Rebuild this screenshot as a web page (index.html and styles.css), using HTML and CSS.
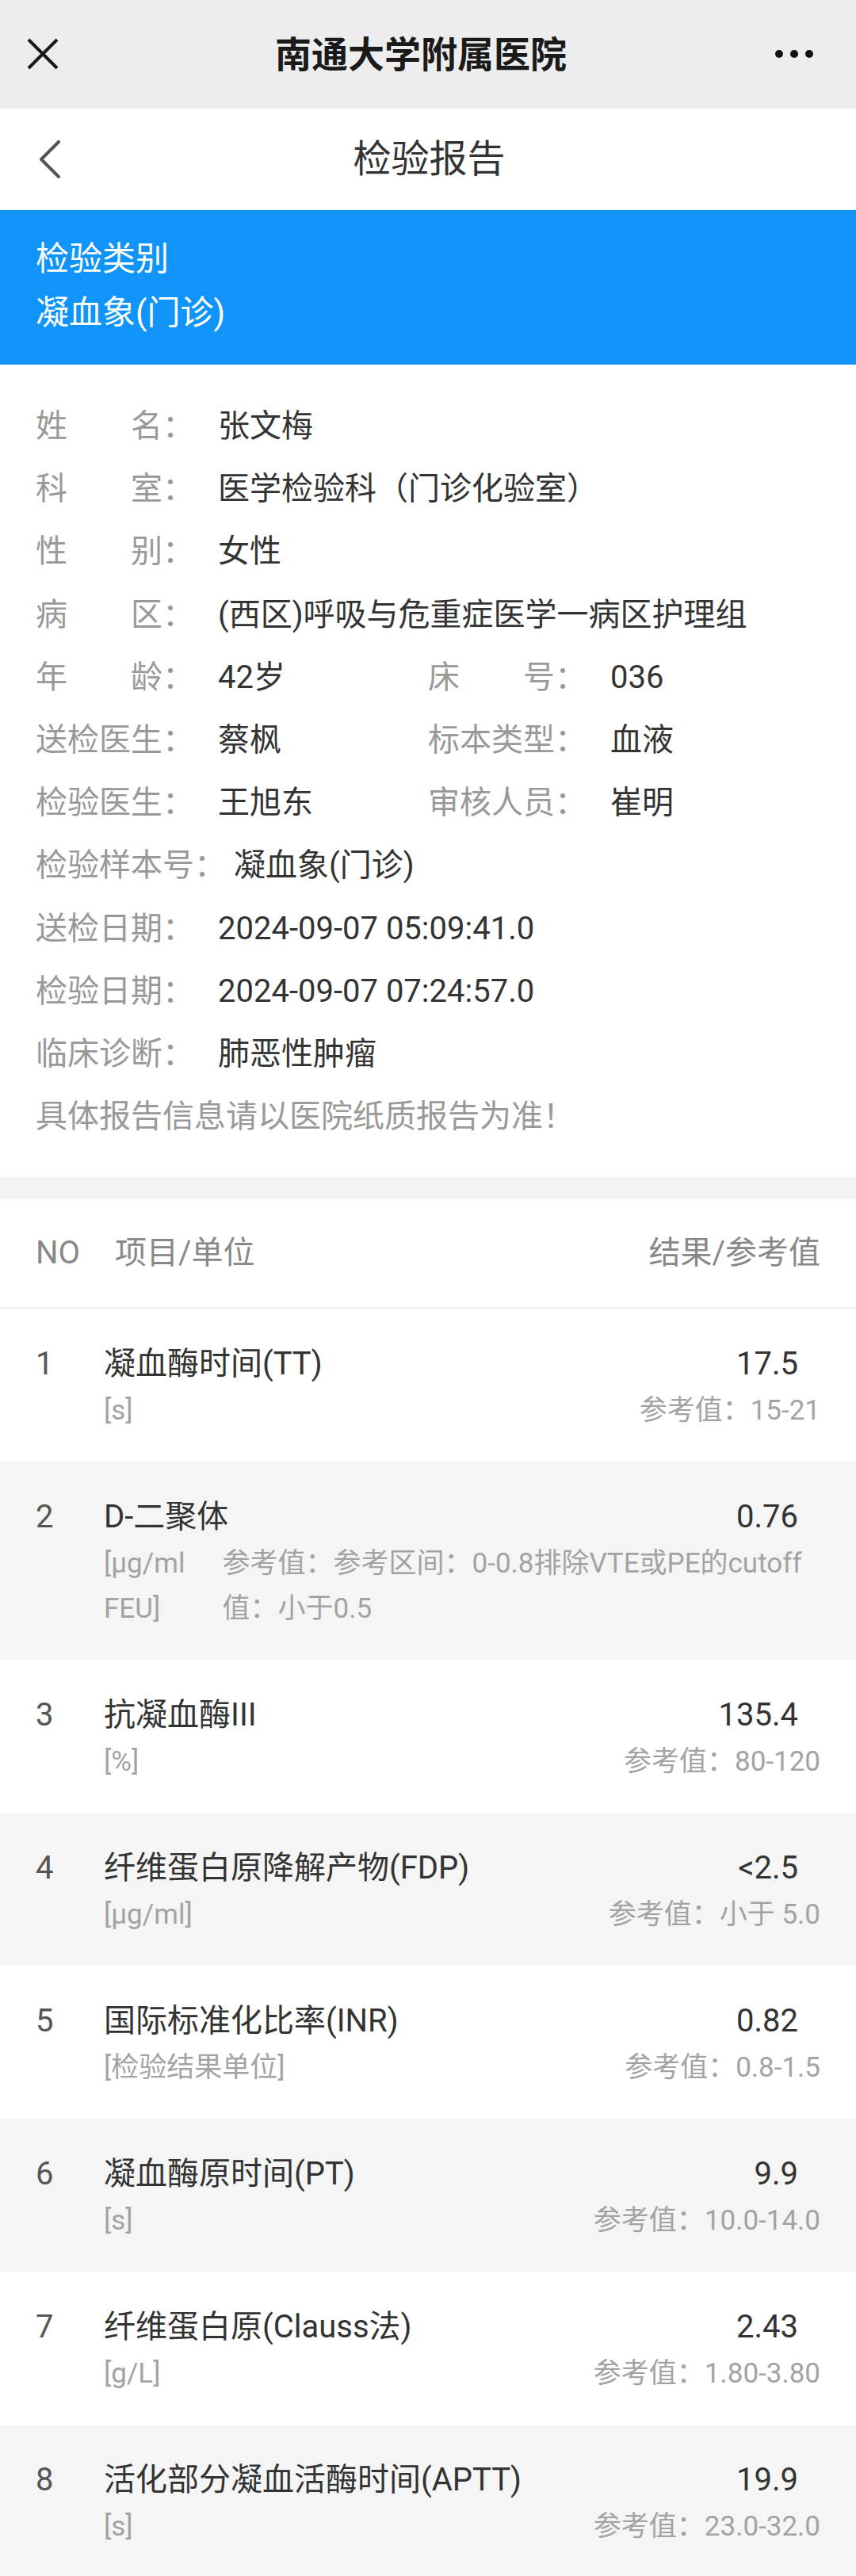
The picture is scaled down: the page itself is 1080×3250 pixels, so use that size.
FILE: index.html
```html
<!DOCTYPE html>
<html lang="zh-CN">
<head>
<meta charset="utf-8">
<title>检验报告</title>
<link rel="stylesheet" href="styles.css">
</head>
<body>
<div class="topbar">
  <div class="tb-left">
    <svg class="ic-close" width="40" height="40" viewBox="0 0 40 40"><path d="M2 2L38 38M38 2L2 38" stroke="#1a1a1a" stroke-width="4" fill="none"/></svg>
  </div>
  <div class="tb-title">南通大学附属医院</div>
  <div class="tb-right">
    <svg class="ic-more" width="50" height="12" viewBox="0 0 50 12"><circle cx="5" cy="6" r="5" fill="#111"/><circle cx="24" cy="6" r="5" fill="#111"/><circle cx="43" cy="6" r="5" fill="#111"/></svg>
  </div>
</div>

<div class="navbar">
  <div class="nb-left">
    <svg class="ic-back" width="30" height="48" viewBox="0 0 30 48"><path d="M26 2L4 24L26 46" stroke="#555" stroke-width="4" fill="none" stroke-linecap="round" stroke-linejoin="round"/></svg>
  </div>
  <div class="nb-title">检验报告</div>
  <div class="nb-right"></div>
</div>

<div class="category">
  <div>检验类别</div>
  <div>凝血象(门诊)</div>
</div>

<div class="info">
  <div class="irow"><span class="lab"><span class="j">姓名</span>：</span><span class="val">张文梅</span></div>
  <div class="irow"><span class="lab"><span class="j">科室</span>：</span><span class="val">医学检验科（门诊化验室）</span></div>
  <div class="irow"><span class="lab"><span class="j">性别</span>：</span><span class="val">女性</span></div>
  <div class="irow"><span class="lab"><span class="j">病区</span>：</span><span class="val">(西区)呼吸与危重症医学一病区护理组</span></div>
  <div class="irow two">
    <div class="cell"><span class="lab"><span class="j">年龄</span>：</span><span class="val">42岁</span></div>
    <div class="cell"><span class="lab"><span class="j">床号</span>：</span><span class="val">036</span></div>
  </div>
  <div class="irow two">
    <div class="cell"><span class="lab">送检医生：</span><span class="val">蔡枫</span></div>
    <div class="cell"><span class="lab">标本类型：</span><span class="val">血液</span></div>
  </div>
  <div class="irow two">
    <div class="cell"><span class="lab">检验医生：</span><span class="val">王旭东</span></div>
    <div class="cell"><span class="lab">审核人员：</span><span class="val">崔明</span></div>
  </div>
  <div class="irow"><span class="lab">检验样本号：</span><span class="val">凝血象(门诊)</span></div>
  <div class="irow"><span class="lab">送检日期：</span><span class="val">2024-09-07 05:09:41.0</span></div>
  <div class="irow"><span class="lab">检验日期：</span><span class="val">2024-09-07 07:24:57.0</span></div>
  <div class="irow"><span class="lab">临床诊断：</span><span class="val">肺恶性肿瘤</span></div>
  <div class="irow note">具体报告信息请以医院纸质报告为准！</div>
</div>

<div class="band"></div>

<div class="thead">
  <span class="th-no">NO</span>
  <span class="th-item">项目/单位</span>
  <span class="th-res">结果/参考值</span>
</div>

<div class="rows">
  <div class="row">
    <div class="no">1</div>
    <div class="main">
      <div class="l1"><span class="name">凝血酶时间(TT)</span><span class="res">17.5</span></div>
      <div class="l2"><span class="unit">[s]</span><span class="ref">参考值：15-21</span></div>
    </div>
  </div>
  <div class="row alt">
    <div class="no">2</div>
    <div class="main">
      <div class="l1"><span class="name">D-二聚体</span><span class="res">0.76</span></div>
      <div class="l2"><span class="unit">[µg/ml FEU]</span><span class="ref">参考值：参考区间：0-0.8排除VTE或PE的cutoff值：小于0.5</span></div>
    </div>
  </div>
  <div class="row">
    <div class="no">3</div>
    <div class="main">
      <div class="l1"><span class="name">抗凝血酶III</span><span class="res">135.4</span></div>
      <div class="l2"><span class="unit">[%]</span><span class="ref">参考值：80-120</span></div>
    </div>
  </div>
  <div class="row alt">
    <div class="no">4</div>
    <div class="main">
      <div class="l1"><span class="name">纤维蛋白原降解产物(FDP)</span><span class="res">&lt;2.5</span></div>
      <div class="l2"><span class="unit">[µg/ml]</span><span class="ref">参考值：小于 5.0</span></div>
    </div>
  </div>
  <div class="row">
    <div class="no">5</div>
    <div class="main">
      <div class="l1"><span class="name">国际标准化比率(INR)</span><span class="res">0.82</span></div>
      <div class="l2"><span class="unit">[检验结果单位]</span><span class="ref">参考值：0.8-1.5</span></div>
    </div>
  </div>
  <div class="row alt">
    <div class="no">6</div>
    <div class="main">
      <div class="l1"><span class="name">凝血酶原时间(PT)</span><span class="res">9.9</span></div>
      <div class="l2"><span class="unit">[s]</span><span class="ref">参考值：10.0-14.0</span></div>
    </div>
  </div>
  <div class="row">
    <div class="no">7</div>
    <div class="main">
      <div class="l1"><span class="name">纤维蛋白原(Clauss法)</span><span class="res">2.43</span></div>
      <div class="l2"><span class="unit">[g/L]</span><span class="ref">参考值：1.80-3.80</span></div>
    </div>
  </div>
  <div class="row alt">
    <div class="no">8</div>
    <div class="main">
      <div class="l1"><span class="name">活化部分凝血活酶时间(APTT)</span><span class="res">19.9</span></div>
      <div class="l2"><span class="unit">[s]</span><span class="ref">参考值：23.0-32.0</span></div>
    </div>
  </div>
</div>
</body>
</html>
```
FILE: styles.css
```css
* { box-sizing: border-box; }
html, body {
  margin: 0;
  padding: 0;
  background: #ffffff;
}
body {
  font-family: Roboto, "Noto Sans CJK SC", "Noto Sans", sans-serif;
  color: #333333;
  font-size: 40px;
}

/* top bar */
.topbar {
  height: 137px;
  background: #ededed;
  display: grid;
  grid-template-columns: 1fr auto 1fr;
  align-items: center;
  padding: 0 52px 0 34px;
}
.tb-left { display: flex; align-items: center; }
.tb-right { display: flex; justify-content: flex-end; align-items: center; }
.ic-close { display: block; margin-top: -2px; }
.ic-more { display: block; margin-top: -2px; }
.tb-title {
  font-size: 46px;
  font-weight: 700;
  color: #1a1a1a;
  line-height: 60px;
}

/* nav bar */
.navbar {
  height: 128px;
  background: #ffffff;
  display: grid;
  grid-template-columns: 1fr auto 1fr;
  align-items: center;
  padding: 0 45px 0 48px;
}
.nb-left { display: flex; align-items: center; }
.ic-back { display: block; }
.nb-title {
  font-size: 48px;
  color: #333333;
  line-height: 60px;
}

/* category */
.category {
  background: #1194f9;
  color: #ffffff;
  font-size: 42px;
  line-height: 68px;
  padding: 28px 45px 31px;
}

/* info */
.info {
  padding: 38px 45px 37px;
}
.irow {
  display: flex;
  align-items: center;
  height: 79.2px;
  line-height: 79px;
  white-space: nowrap;
}
.irow.two {
  display: grid;
  grid-template-columns: 1fr 1fr;
}
.cell {
  display: flex;
  align-items: center;
}
.lab {
  color: #999999;
  min-width: 220px;
  display: inline-block;
}
.j {
  display: inline-block;
  width: 160px;
  text-align: justify;
  text-align-last: justify;
}
.val {
  color: #333333;
  margin-left: 10px;
}
.note {
  color: #999999;
}

.band {
  height: 28px;
  background: #f4f4f4;
}

/* table header */
.thead {
  display: flex;
  align-items: center;
  padding: 38px 45px 38px;
  line-height: 60px;
  color: #888888;
  border-bottom: 2px solid #f0f0f0;
}
.th-no { width: 100px; }
.th-item { flex: 1; }
.th-res { }

/* rows */
.row {
  display: flex;
  padding: 40px 45px 36px;
  background: #ffffff;
}
.row.alt { background: #f5f5f5; }
.no {
  width: 86px;
  flex: none;
  line-height: 60px;
  color: #555555;
}
.main {
  flex: 1;
  min-width: 0;
}
.l1 {
  display: flex;
  justify-content: space-between;
  line-height: 60px;
}
.name { color: #333333; }
.res {
  color: #333333;
  padding-right: 28px;
}
.l2 {
  display: flex;
  justify-content: space-between;
  font-size: 35px;
  line-height: 57px;
  color: #a3a3a3;
}
.unit { flex: 0 1 auto; }
.ref { flex: 0 1 auto; text-align: left; }
```
